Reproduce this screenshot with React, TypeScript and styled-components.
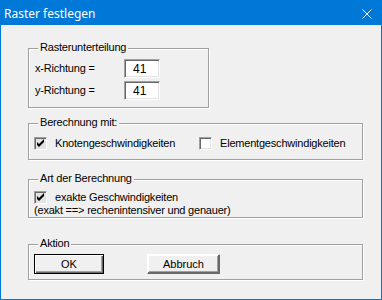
import React from "react";
import styled, { createGlobalStyle } from "styled-components";

const GlobalStyle = createGlobalStyle`
  html, body {
    margin: 0;
    padding: 0;
    background: #f0f0f0;
  }
  * {
    box-sizing: border-box;
  }
`;

export default function App() {
  return (
    <>
      <GlobalStyle />
      <Window>
        <TitleBar>
          <Title>Raster festlegen</Title>
          <CloseIcon width="10" height="10" viewBox="0 0 10 10">
            <path d="M0.5 0.5 L9.5 9.5 M9.5 0.5 L0.5 9.5" stroke="#fff" strokeWidth="1" />
          </CloseIcon>
        </TitleBar>
        <Body>
          <Group $mt={23} $h={60} $w={181} $pad="10px 0 0 6px">
            <Legend>Rasterunterteilung</Legend>
            <InputGrid>
              <Label>x-Richtung =</Label>
              <NumberBox readOnly value="41" />
              <Label>y-Richtung =</Label>
              <NumberBox readOnly value="41" />
            </InputGrid>
          </Group>

          <Group $mt={15} $h={37} $pad="13px 0 0 5px">
            <Legend>Berechnung mit:</Legend>
            <Options>
              <CheckRow>
                <Check checked />
                <Label>Knotengeschwindigkeiten</Label>
              </CheckRow>
              <CheckRow>
                <Check />
                <Label>Elementgeschwindigkeiten</Label>
              </CheckRow>
            </Options>
          </Group>

          <Group $mt={19} $h={39} $pad="11px 0 0 5px">
            <Legend>Art der Berechnung</Legend>
            <CheckRow>
              <Check checked />
              <Label>exakte Geschwindigkeiten</Label>
            </CheckRow>
            <Note>(exakt ==&gt; rechenintensiver und genauer)</Note>
          </Group>

          <Group $mt={26} $h={36} $pad="9px 0 0 5px">
            <Legend>Aktion</Legend>
            <Buttons>
              <Button $w={70} $default>OK</Button>
              <Button $w={73}>Abbruch</Button>
            </Buttons>
          </Group>
        </Body>
      </Window>
    </>
  );
}

function Check({ checked }: { checked?: boolean }) {
  return (
    <CheckBox $checked={checked}>
      {checked && (
        <svg width="9" height="9" viewBox="0 0 9 9">
          <path d="M1 3 L1 6 L3 8 L8 3 L8 0 L3 5 Z" fill="#000" />
        </svg>
      )}
    </CheckBox>
  );
}

const Window = styled.div`
  width: 382px;
  height: 300px;
  border: 1px solid #0078d7;
  background: #f0f0f0;
  display: flex;
  flex-direction: column;
  font-family: "Liberation Sans", Arial, sans-serif;
  font-size: 11px;
  letter-spacing: -0.2px;
  color: #000;
`;

const TitleBar = styled.div`
  height: 24px;
  flex: 0 0 24px;
  background: #0078d7;
  display: flex;
  align-items: center;
  justify-content: space-between;
  padding: 0 9px 0 3px;
  letter-spacing: 0;
`;

const Title = styled.span`
  font-family: "Noto Sans", "Open Sans", sans-serif;
  font-size: 12px;
  color: #fff;
`;

const CloseIcon = styled.svg`
  display: block;
  margin-top: 1px;
`;

const Body = styled.div`
  flex: 1;
  padding: 0 18px 0 27px;
`;

const Group = styled.div<{ $mt: number; $h: number; $w?: number; $pad: string }>`
  position: relative;
  margin-top: ${(p) => p.$mt}px;
  height: ${(p) => p.$h}px;
  width: ${(p) => (p.$w ? `${p.$w}px` : "auto")};
  padding: ${(p) => p.$pad};
  border: 1px solid #a0a0a0;
  box-shadow: inset 1px 1px #fff, 1px 1px #fff;
`;

const Legend = styled.span`
  position: absolute;
  top: -8px;
  left: 9px;
  padding: 0 2px;
  line-height: 13px;
  background: #f0f0f0;
  white-space: nowrap;
`;

const InputGrid = styled.div`
  display: grid;
  grid-template-columns: 89px 36px;
  row-gap: 3px;
  align-items: center;
`;

const Label = styled.span`
  line-height: 13px;
  white-space: nowrap;
`;

const NumberBox = styled.input`
  width: 36px;
  height: 19px;
  margin: 0;
  padding: 0 0 0 8px;
  border-style: solid;
  border-width: 1px;
  border-color: #a0a0a0 #fff #fff #a0a0a0;
  box-shadow: inset 1px 1px #696969, inset -1px -1px #e3e3e3;
  background: #fff;
  font-family: "Liberation Sans", Arial, sans-serif;
  font-size: 12px;
  color: #000;
  outline: none;
`;

const Options = styled.div`
  display: grid;
  grid-template-columns: 165px auto;
`;

const CheckRow = styled.div`
  display: flex;
  align-items: center;
  gap: 8px;
`;

const CheckBox = styled.span<{ $checked?: boolean }>`
  width: 13px;
  height: 13px;
  flex: 0 0 13px;
  display: flex;
  align-items: center;
  justify-content: center;
  border-style: solid;
  border-width: 1px;
  border-color: #a0a0a0 #fff #fff #a0a0a0;
  box-shadow: inset 1px 1px #696969, inset -1px -1px #e3e3e3;
  background: ${(p) => (p.$checked ? "#e3e3e3" : "#fff")};
`;

const Note = styled.div`
  line-height: 12px;
`;

const Buttons = styled.div`
  display: flex;
  gap: 43px;
`;

const Button = styled.button<{ $w: number; $default?: boolean }>`
  width: ${(p) => p.$w}px;
  height: 20px;
  margin: 0;
  padding: 0;
  background: #f0f0f0;
  font-family: "Liberation Sans", Arial, sans-serif;
  font-size: 11px;
  color: #000;
  border: 1px solid ${(p) => (p.$default ? "#000" : "#fff")};
  box-shadow: ${(p) =>
    p.$default
      ? "inset 1px 1px #fff, inset -1px -1px #696969, inset -2px -2px #a0a0a0"
      : "inset -1px -1px #696969, inset 1px 1px #fff, inset -2px -2px #a0a0a0"};
  ${(p) => (p.$default ? "" : "border-color: #fff #696969 #696969 #fff;")}
`;
